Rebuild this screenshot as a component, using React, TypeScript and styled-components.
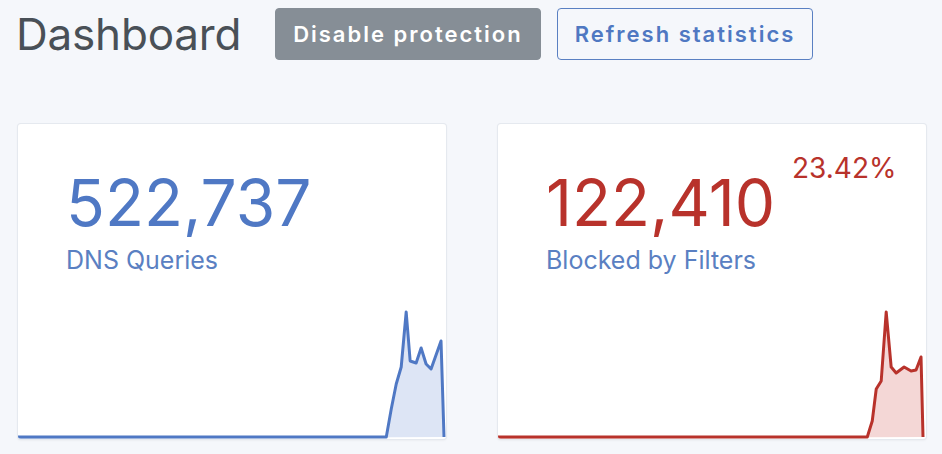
import React from "react";
import styled, { createGlobalStyle } from "styled-components";

const GlobalStyle = createGlobalStyle`
  html, body {
    margin: 0;
    padding: 0;
    background: #f5f7fb;
    font-family: Inter, "Noto Sans", sans-serif;
  }
  * { box-sizing: border-box; }
`;

const Page = styled.div`
  width: 942px;
  height: 454px;
  overflow: hidden;
  padding: 8px 15px 0 16px;
`;

const Header = styled.div`
  display: flex;
  align-items: center;
  height: 52px;
`;

const Title = styled.h1`
  margin: 0 34px 0 0;
  font-size: 44px;
  font-weight: 400;
  color: #495057;
  letter-spacing: -0.2px;
  line-height: 1;
`;

const Button = styled.button<{ $variant: "gray" | "outline" }>`
  height: 52px;
  padding: 0 17px;
  margin-right: 16px;
  border-radius: 4px;
  font-family: Inter, "Noto Sans", sans-serif;
  font-size: 22px;
  font-weight: 600;
  letter-spacing: 2px;
  cursor: pointer;
  border: 1.5px solid ${(p) => (p.$variant === "gray" ? "#868e96" : "#5a80c2")};
  background: ${(p) => (p.$variant === "gray" ? "#868e96" : "transparent")};
  color: ${(p) => (p.$variant === "gray" ? "#ffffff" : "#4f78c2")};
`;

const Cards = styled.div`
  display: grid;
  grid-template-columns: 430px 430px;
  gap: 50px;
  margin: 63px 0 0 1px;
`;

const Card = styled.div`
  height: 317px;
  background: #ffffff;
  border: 1px solid rgba(0, 40, 100, 0.1);
  border-radius: 4px;
  box-shadow: 0 1px 2px rgba(0, 0, 0, 0.04);
  display: flex;
  flex-direction: column;
  overflow: hidden;
`;

const Body = styled.div`
  padding: 41px 0 0 48px;
`;

const NumberRow = styled.div`
  display: flex;
  align-items: flex-start;
`;

const Value = styled.div<{ $color: string }>`
  font-size: 64px;
  font-weight: 400;
  line-height: 76px;
  color: ${(p) => p.$color};
`;

const Percent = styled.div`
  margin: -13px 0 0 17px;
  font-size: 28px;
  line-height: 32px;
  color: #b8322b;
`;

const Label = styled.div`
  margin-top: 3px;
  font-size: 25px;
  line-height: 32px;
  color: #5a80c2;
`;

const Chart = styled.svg`
  display: block;
  margin-top: auto;
  width: 100%;
  height: 130px;
`;

type Pt = [number, number];

const blue = "#4f78c4";
const red = "#b8322b";

const bluePts: Pt[] = [
  [0, 128], [370, 128], [375, 100], [380, 75], [385, 58], [390, 3], [394, 52],
  [400, 54], [405, 39], [410, 55], [415, 60], [425, 32], [428, 128],
];
const redPts: Pt[] = [
  [0, 128], [371, 128], [376, 112], [380, 80], [385, 72], [390, 3], [395, 58],
  [400, 64], [408, 58], [415, 62], [420, 61], [425, 48], [427, 128],
];

function Spark({ pts, stroke, fill }: { pts: Pt[]; stroke: string; fill: string }) {
  const line = pts.map((p) => p.join(",")).join(" ");
  return (
    <Chart viewBox="0 0 430 130" preserveAspectRatio="none">
      <polygon points={`${line} 0,130`} fill={fill} />
      <polyline points={line} fill="none" stroke={stroke} strokeWidth={3} strokeLinejoin="round" />
    </Chart>
  );
}

export default function App() {
  return (
    <Page>
      <GlobalStyle />
      <Header>
        <Title>Dashboard</Title>
        <Button $variant="gray">Disable protection</Button>
        <Button $variant="outline">Refresh statistics</Button>
      </Header>
      <Cards>
        <Card>
          <Body>
            <NumberRow>
              <Value $color={blue}>522,737</Value>
            </NumberRow>
            <Label>DNS Queries</Label>
          </Body>
          <Spark pts={bluePts} stroke={blue} fill="#dde5f5" />
        </Card>
        <Card>
          <Body>
            <NumberRow>
              <Value $color={red}>122,410</Value>
              <Percent>23.42%</Percent>
            </NumberRow>
            <Label>Blocked by Filters</Label>
          </Body>
          <Spark pts={redPts} stroke={red} fill="#f4d7d6" />
        </Card>
      </Cards>
    </Page>
  );
}
